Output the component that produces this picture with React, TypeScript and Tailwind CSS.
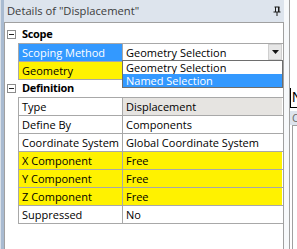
import React from "react";

function Minus() {
  return (
    <div className="w-[9px] h-[9px] border border-[#8c8c8c] bg-white flex items-center justify-center">
      <div className="w-[5px] h-[1px] bg-[#222]" />
    </div>
  );
}

function Pin() {
  return (
    <svg width="8" height="10" viewBox="0 0 8 10" className="block">
      <rect x="1.5" y="0.5" width="5" height="1" fill="#1a1a1a" />
      <rect x="2" y="1" width="1" height="5" fill="#1a1a1a" />
      <rect x="5" y="1" width="1.5" height="5" fill="#1a1a1a" />
      <rect x="0.5" y="5.5" width="7" height="1" fill="#1a1a1a" />
      <rect x="3.5" y="6" width="1" height="4" fill="#1a1a1a" />
    </svg>
  );
}

type RowProps = {
  label: string;
  value?: React.ReactNode;
  labelCls?: string;
  valueCls?: string;
  last?: boolean;
};

function Row({ label, value, labelCls = "", valueCls = "", last = false }: RowProps) {
  return (
    <div className={last ? "flex h-[19px]" : "flex h-[18px]"}>
      <div className="w-[13px] shrink-0" />
      <div
        className={
          last
            ? "flex-1 flex border-t border-l border-b border-[#a8a8a8]"
            : "flex-1 flex border-t border-l border-[#a8a8a8]"
        }
      >
        <div className={`w-[103px] shrink-0 pl-[3px] leading-[17px] whitespace-nowrap ${labelCls}`}>{label}</div>
        <div className={`w-[160px] shrink-0 border-l border-[#a8a8a8] leading-[17px] whitespace-nowrap ${valueCls}`}>
          {value}
        </div>
      </div>
    </div>
  );
}

export default function App() {
  return (
    <div className="w-[297px] h-[249px] overflow-hidden flex bg-white font-['Open_Sans',sans-serif] text-[11px] text-black">
      <div className="w-[4px] h-full shrink-0 border-l border-[#d9e0e8] bg-[#a9bbd1]" />
      <div className="w-[285px] h-full shrink-0 flex flex-col bg-[#f7f9fb]">
        <div className="h-[22px] w-[280px] shrink-0 bg-[#dde4ed] flex items-center pl-[3px] pr-[3px] text-[#3b3b3b]">
          <span className="flex-1 leading-[22px] whitespace-nowrap text-[11.2px]">Details of "Displacement"</span>
          <Pin />
        </div>
        <div className="w-[280px] flex-1 border-l border-t border-r border-[#a0a0a0] bg-white flex flex-col">
          <div className="flex h-[20px] pt-[2px]">
            <div className="w-[13px] shrink-0 flex items-center justify-center">
              <Minus />
            </div>
            <div className="flex-1 flex items-center pl-[4px] font-bold tracking-[-0.3px]">Scope</div>
          </div>
          <Row
            label="Scoping Method"
            labelCls="bg-[#3399ff] text-white"
            valueCls="relative"
            value={
              <div className="flex h-[17px]">
                <span className="flex-1 pl-[3px]">Geometry Selection</span>
                <div className="w-[14px] h-[16px] bg-[#e6e6e6] border border-[#cfcfcf] flex items-center justify-center">
                  <svg width="7" height="4" viewBox="0 0 7 4" className="block">
                    <path d="M0 0 H7 L3.5 4 Z" fill="#111" />
                  </svg>
                </div>
                <div className="absolute left-[-1px] top-[16px] w-[161px] h-[28px] border border-[#6e6e6e] bg-white z-10 flex flex-col">
                  <div className="h-[13px] leading-[13px] pl-[3px]">Geometry Selection</div>
                  <div className="h-[13px] leading-[13px] pl-[3px] bg-[#3399ff] text-white">Named Selection</div>
                </div>
              </div>
            }
          />
          <Row label="Geometry" labelCls="bg-[#fff200]" value={<span className="pl-[3px]"></span>} />
          <div className="flex h-[18px]">
            <div className="w-[13px] shrink-0 flex items-center justify-center">
              <Minus />
            </div>
            <div className="flex-1 border-t border-[#a8a8a8] flex items-center pl-[4px] font-bold tracking-[-0.3px]">
              Definition
            </div>
          </div>
          <Row label="Type" value="Displacement" valueCls="bg-[#e6e4e1] pl-[3px]" />
          <Row label="Define By" value="Components" valueCls="pl-[3px]" />
          <Row label="Coordinate System" value="Global Coordinate System" valueCls="pl-[3px]" />
          <Row label="X Component" value="Free" labelCls="bg-[#fff200]" valueCls="bg-[#fff200] pl-[3px]" />
          <Row label="Y Component" value="Free" labelCls="bg-[#fff200]" valueCls="bg-[#fff200] pl-[3px]" />
          <Row label="Z Component" value="Free" labelCls="bg-[#fff200]" valueCls="bg-[#fff200] pl-[3px]" />
          <Row label="Suppressed" value="No" valueCls="pl-[3px]" last />
        </div>
      </div>
      <div className="w-[1px] h-full shrink-0 bg-[#a0a0a0]" />
      <div className="w-[7px] h-full shrink-0 flex flex-col bg-white overflow-hidden">
        <div className="h-[88px] shrink-0" />
        <div className="h-[20px] shrink-0 border-l border-b border-black overflow-hidden text-[14px] leading-[18px] pl-[1px] font-['Liberation_Sans',sans-serif]">
          N
        </div>
        <div className="h-[3px] shrink-0" />
        <div className="h-[14px] shrink-0 bg-[#dde4ed] text-[#6b6b6b] text-[11px] leading-[14px] pl-[2px] overflow-hidden">
          C
        </div>
        <div className="flex-1 ml-[2px] border-l border-t border-[#a0a0a0]" />
      </div>
    </div>
  );
}
